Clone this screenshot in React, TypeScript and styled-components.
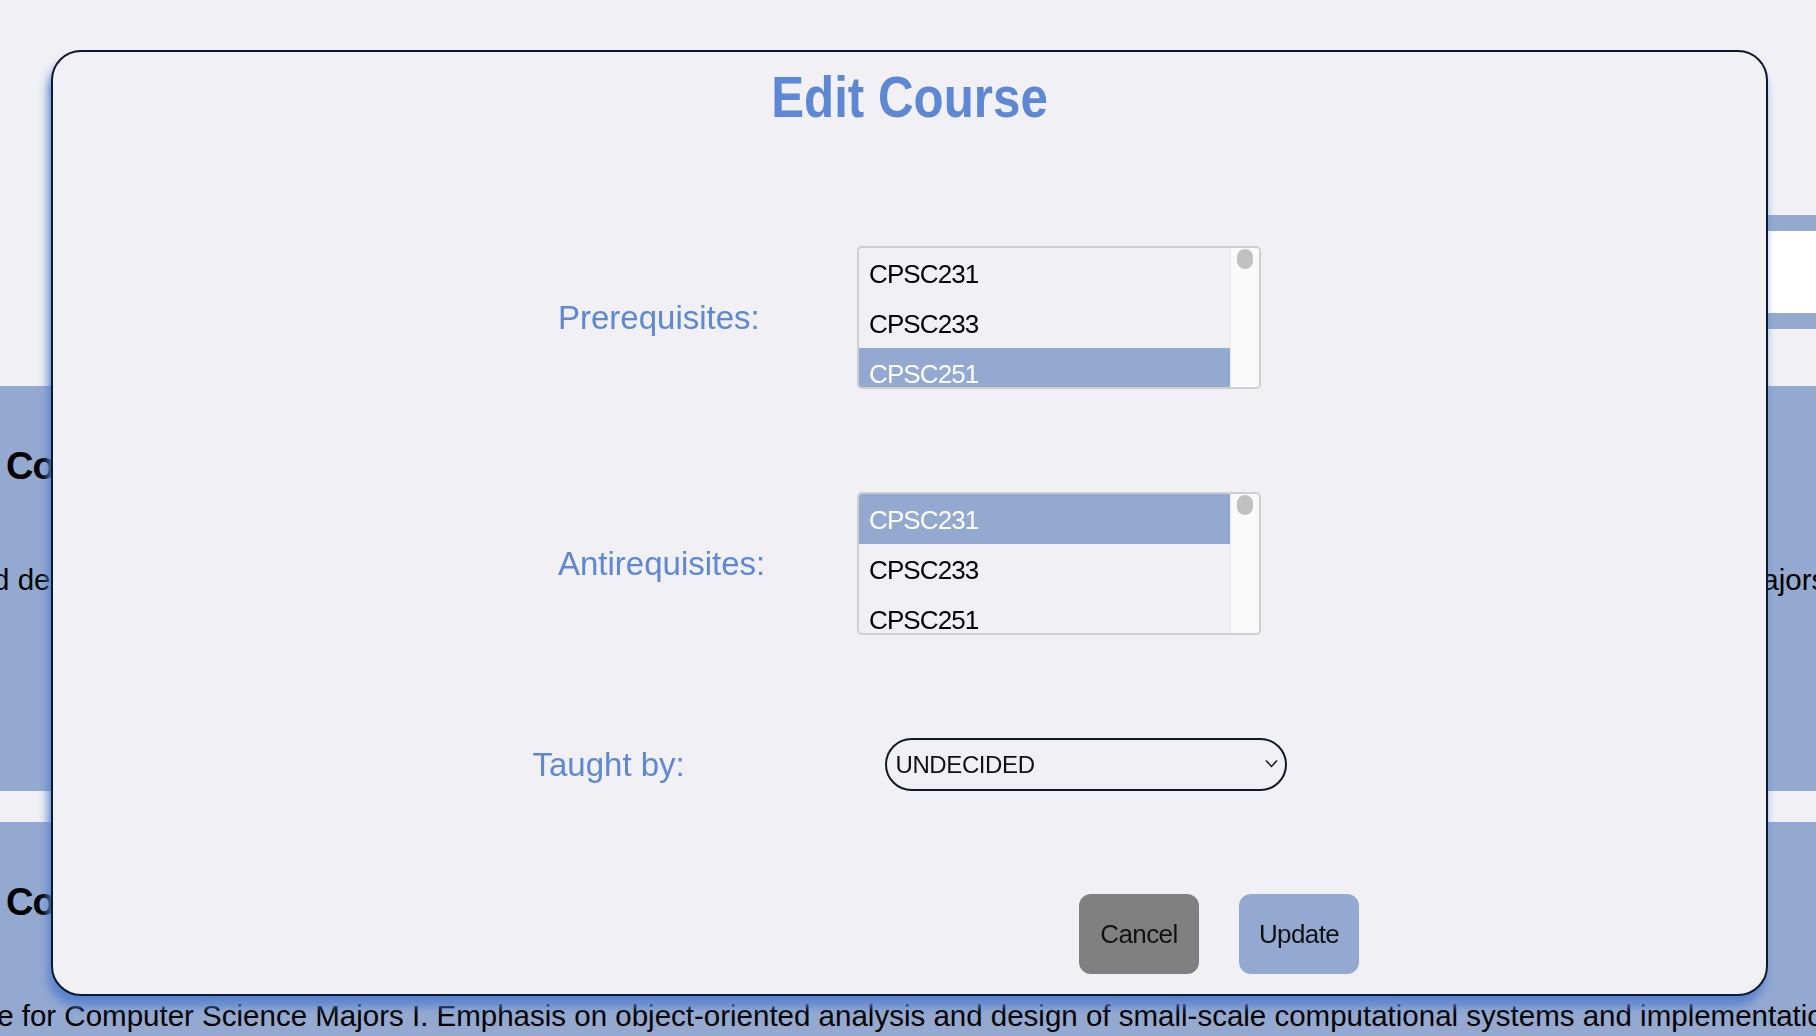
import React from "react";
import styled, { createGlobalStyle } from "styled-components";

const SANS = `"Liberation Sans", Arial, sans-serif`;

const GlobalStyle = createGlobalStyle`
  *, *::before, *::after { box-sizing: border-box; }
  html, body {
    margin: 0;
    padding: 0;
    overflow: hidden;
    background: #f0f0f5;
  }
  body { font-family: ${SANS}; }
`;

const Page = styled.div`
  width: 100vw;
  height: 100vh;
  overflow: hidden;
  background: #f0f0f5;
`;

const Header = styled.header`
  height: 386px;
  padding-top: 215px;
  display: flex;
  justify-content: flex-end;
  align-items: flex-start;
`;

const Search = styled.input`
  width: 820px;
  height: 114px;
  border: 16px solid #94a9d0;
  border-right: none;
  background: #ffffff;
  outline: none;
  font: 26px ${SANS};
`;

const Panel = styled.section`
  background: #94a9d0;
  height: 405px;
  padding-top: 56px;
  overflow: hidden;
  & + & {
    margin-top: 31px;
  }
`;

const CourseTitle = styled.h2`
  margin: 0;
  padding-left: 6px;
  font: bold 38px/48px ${SANS};
  letter-spacing: -1px;
  color: #000;
  white-space: nowrap;
`;

const CourseDesc = styled.p`
  margin: 70px 0 0;
  display: flex;
  justify-content: center;
  font: 29.5px/40px ${SANS};
  color: #000;
  white-space: nowrap;
`;

const Modal = styled.div`
  position: fixed;
  left: 51px;
  top: 50px;
  width: 1717px;
  height: 946px;
  background: #f0f0f5;
  border: 2px solid #0b1a2c;
  border-radius: 30px;
  box-shadow: -3px 10px 10px #5b84d0;
  display: flex;
  flex-direction: column;
  padding-top: 16px;
`;

const Title = styled.h1`
  margin: 0;
  text-align: center;
  font: bold 58px/58px ${SANS};
  color: #5e88d3;
  transform: scaleX(0.85);
`;

const Form = styled.div`
  margin-top: 120px;
  display: flex;
  flex-direction: column;
  gap: 103px;
`;

const Row = styled.div`
  display: flex;
  justify-content: center;
  align-items: center;
`;

const Label = styled.label<{ $width: number }>`
  width: ${(p) => p.$width}px;
  flex: none;
  font: 33px ${SANS};
  color: #5e88d3;
`;

const ListBox = styled.div`
  width: 404px;
  height: 143px;
  flex: none;
  display: flex;
  border: 2px solid #cfcfcf;
  border-radius: 5px;
  overflow: hidden;
  background: #f0f0f5;
`;

const Options = styled.ul`
  flex: 1;
  margin: 0;
  padding: 0;
  list-style: none;
  overflow: hidden;
`;

const Option = styled.li<{ $selected?: boolean }>`
  height: 50px;
  padding-left: 10px;
  font: 26px/53px ${SANS};
  letter-spacing: -0.9px;
  background: ${(p) => (p.$selected ? "#94a9d0" : "transparent")};
  color: ${(p) => (p.$selected ? "#ffffff" : "#000000")};
`;

const Track = styled.div`
  width: 29px;
  flex: none;
  background: #fafafa;
  border-left: 1px solid #ececec;
  display: flex;
  justify-content: center;
  padding-top: 1px;
`;

const Thumb = styled.div`
  width: 16px;
  height: 20px;
  border-radius: 8px;
  background: #c1c1c1;
`;

const SelectWrap = styled.div`
  position: relative;
  width: 402px;
  height: 53px;
  flex: none;
`;

const Select = styled.select`
  appearance: none;
  -webkit-appearance: none;
  width: 100%;
  height: 100%;
  border: 2px solid #0d1b2a;
  border-radius: 27px;
  background: transparent;
  padding: 0 40px 0 9px;
  font: 24px ${SANS};
  letter-spacing: -0.4px;
  color: #111;
  outline: none;
`;

const Chevron = styled.svg`
  position: absolute;
  right: 9px;
  top: 21px;
  pointer-events: none;
`;

const Actions = styled.div`
  display: flex;
  justify-content: flex-end;
  gap: 40px;
  padding-right: 407px;
`;

const Button = styled.button<{ $variant: "cancel" | "primary" }>`
  width: 120px;
  height: 80px;
  border: none;
  border-radius: 12px;
  font: 26px ${SANS};
  letter-spacing: -0.6px;
  color: #111;
  background: ${(p) => (p.$variant === "cancel" ? "#808080" : "#94a9d0")};
  cursor: pointer;
`;

const courses = ["CPSC231", "CPSC233", "CPSC251"];

function CourseList({ selected }: { selected: string }) {
  return (
    <ListBox role="listbox" aria-multiselectable="true">
      <Options>
        {courses.map((c) => (
          <Option key={c} $selected={c === selected} aria-selected={c === selected}>
            {c}
          </Option>
        ))}
      </Options>
      <Track>
        <Thumb />
      </Track>
    </ListBox>
  );
}

export default function App() {
  return (
    <Page>
      <GlobalStyle />
      <Header>
        <Search type="text" aria-label="Search courses" />
      </Header>
      <Panel>
        <CourseTitle>Computer Science I — CPSC 231</CourseTitle>
        <CourseDesc>
          <span>
            Analysis and design of small-scale computational systems, and implementation using the procedural
            languages. Designed for Computer Science Majors I, II and III.
          </span>
        </CourseDesc>
      </Panel>
      <Panel>
        <CourseTitle>Computer Science II — CPSC 233</CourseTitle>
        <CourseDesc>
          <span>
            The course for Computer Science Majors I. Emphasis on object-oriented analysis and design of
            small-scale computational systems and implementation in Java.
          </span>
        </CourseDesc>
      </Panel>

      <Modal role="dialog" aria-label="Edit Course">
        <Title>Edit Course</Title>
        <Form>
          <Row>
            <Label $width={299}>Prerequisites:</Label>
            <CourseList selected="CPSC251" />
          </Row>
          <Row>
            <Label $width={299}>Antirequisites:</Label>
            <CourseList selected="CPSC231" />
          </Row>
          <Row>
            <Label $width={352}>Taught by:</Label>
            <SelectWrap>
              <Select defaultValue="UNDECIDED">
                <option value="UNDECIDED">UNDECIDED</option>
              </Select>
              <Chevron width="13" height="9" viewBox="0 0 13 9" fill="none">
                <path d="M1 1.5 L6.5 7.5 L12 1.5" stroke="#111" strokeWidth="1.4" />
              </Chevron>
            </SelectWrap>
          </Row>
          <Actions>
            <Button $variant="cancel">Cancel</Button>
            <Button $variant="primary">Update</Button>
          </Actions>
        </Form>
      </Modal>
    </Page>
  );
}
